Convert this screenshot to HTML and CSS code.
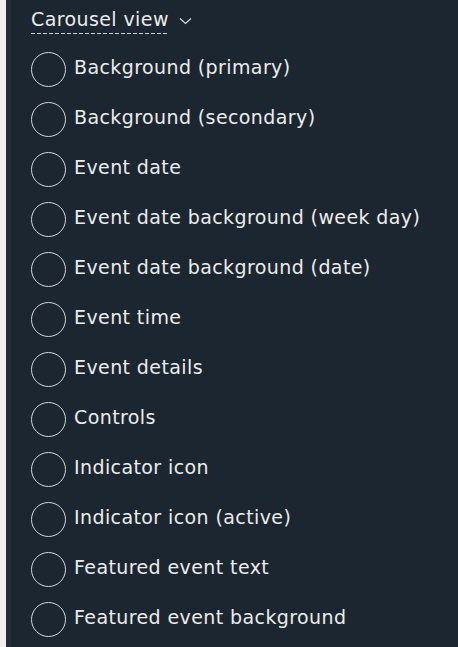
FILE: index.html
```html
<!DOCTYPE html>
<html lang="en">
<head>
  <meta charset="UTF-8" />
  <meta name="viewport" content="width=device-width, initial-scale=1.0" />
  <title>Carousel view colours</title>
  <link rel="stylesheet" href="styles.css">
</head>
<body>
  <div class="panel">
    <div class="title">
      <span class="title-text">Carousel view</span>
      <svg class="chevron" width="13" height="8" viewBox="0 0 13 8"><path d="M1 1.5 L6.5 6.5 L12 1.5" fill="none" stroke="#d8dadc" stroke-width="1.2"/></svg>
    </div>
    <ul class="colors">
      <li class="color-row"><span class="swatch"></span><span class="label">Background (primary)</span></li>
      <li class="color-row"><span class="swatch"></span><span class="label">Background (secondary)</span></li>
      <li class="color-row"><span class="swatch"></span><span class="label">Event date</span></li>
      <li class="color-row"><span class="swatch"></span><span class="label">Event date background (week day)</span></li>
      <li class="color-row"><span class="swatch"></span><span class="label">Event date background (date)</span></li>
      <li class="color-row"><span class="swatch"></span><span class="label">Event time</span></li>
      <li class="color-row"><span class="swatch"></span><span class="label">Event details</span></li>
      <li class="color-row"><span class="swatch"></span><span class="label">Controls</span></li>
      <li class="color-row"><span class="swatch"></span><span class="label">Indicator icon</span></li>
      <li class="color-row"><span class="swatch"></span><span class="label">Indicator icon (active)</span></li>
      <li class="color-row"><span class="swatch"></span><span class="label">Featured event text</span></li>
      <li class="color-row"><span class="swatch"></span><span class="label">Featured event background</span></li>
    </ul>
  </div>
</body>
</html>
```

FILE: styles.css
```css
body {
  margin: 0;
  background: #efefee;
  font-family: "DejaVu Sans", sans-serif;
}
.panel {
  margin-left: 6px;
  border-left: 5px solid #222d38;
  background: #1c2631;
  height: 647px;
  box-sizing: border-box;
  padding: 8px 0 0 20px;
  color: #ebecec;
  letter-spacing: 0.4px;
}
.title {
  display: flex;
  align-items: flex-start;
  gap: 10px;
  height: 36px;
  font-size: 19px;
}
.title-text {
  padding-bottom: 4px;
  line-height: 22px;
  background: repeating-linear-gradient(to right, #c9ccce 0 4px, transparent 4px 6px) left bottom / 100% 1px no-repeat;
}
.chevron {
  margin-top: 9px;
}
.colors {
  list-style: none;
  margin: 0;
  padding: 0;
}
.color-row {
  display: flex;
  align-items: center;
  gap: 8px;
  height: 50px;
  font-size: 19px;
}
.label {
  padding-bottom: 4px;
}
.swatch {
  width: 35px;
  height: 35px;
  border: 1px solid #d4d6d8;
  border-radius: 50%;
  box-sizing: border-box;
  flex: none;
}
```
